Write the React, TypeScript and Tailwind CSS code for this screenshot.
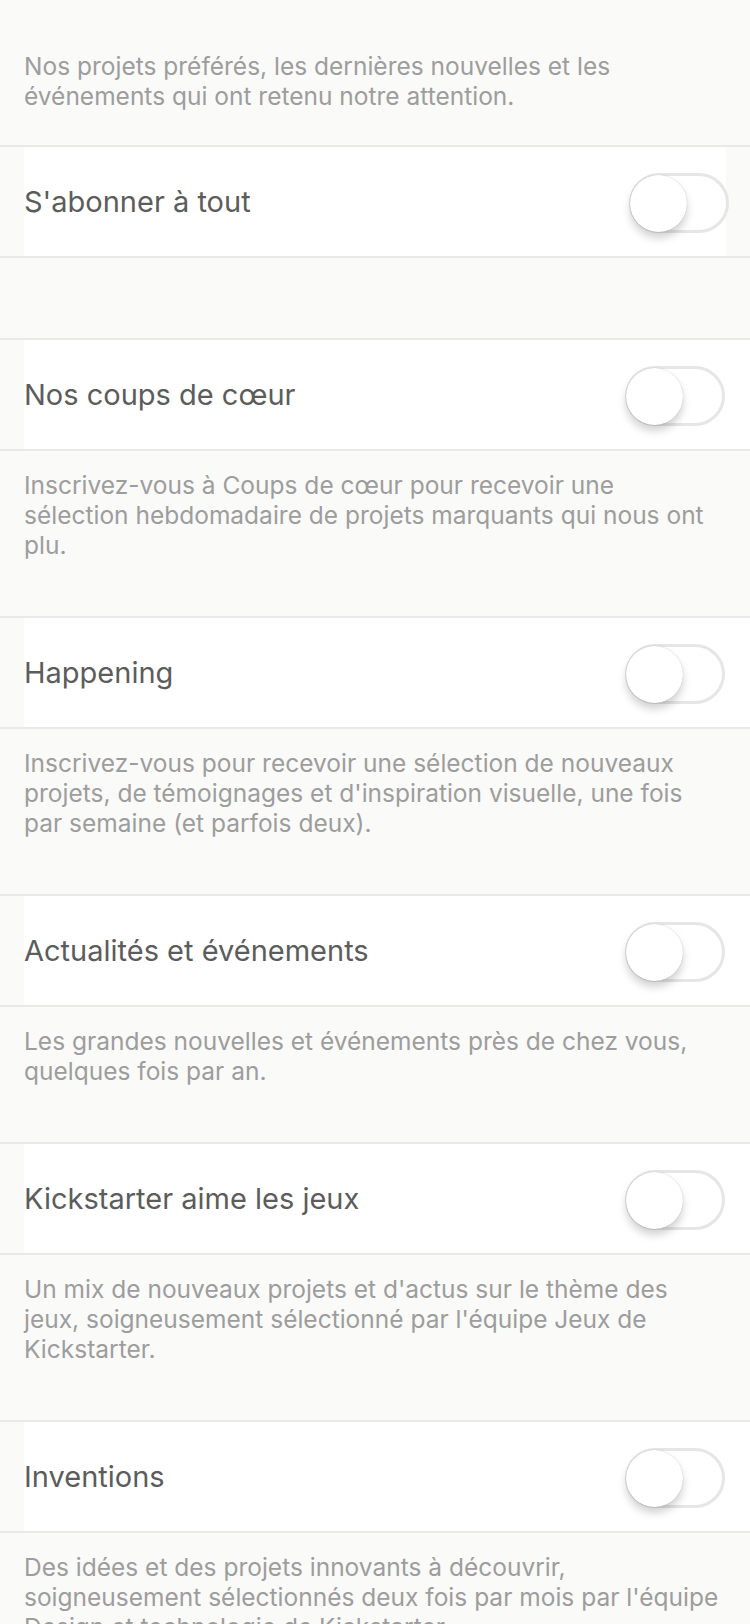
const sections = [
  {
    title: "Nos coups de cœur",
    desc: "Inscrivez-vous à Coups de cœur pour recevoir une sélection hebdomadaire de projets marquants qui nous ont plu.",
  },
  {
    title: "Happening",
    desc: "Inscrivez-vous pour recevoir une sélection de nouveaux projets, de témoignages et d'inspiration visuelle, une fois par semaine (et parfois deux).",
  },
  {
    title: "Actualités et événements",
    desc: "Les grandes nouvelles et événements près de chez vous, quelques fois par an.",
  },
  {
    title: "Kickstarter aime les jeux",
    desc: "Un mix de nouveaux projets et d'actus sur le thème des jeux, soigneusement sélectionné par l'équipe Jeux de Kickstarter.",
  },
  {
    title: "Inventions",
    desc: "Des idées et des projets innovants à découvrir, soigneusement sélectionnés deux fois par mois par l'équipe Design et technologie de Kickstarter.",
  },
];

const Toggle = ({ shift }: { shift?: boolean }) => (
  <div
    className={
      shift
        ? "relative -mr-[3px] mt-[2px] h-[60px] w-[100px] shrink-0 rounded-full border-[3px] border-[#e6e6e6] bg-white"
        : "relative mt-[2px] h-[60px] w-[100px] shrink-0 rounded-full border-[3px] border-[#e6e6e6] bg-white"
    }
  >
    <div className="absolute left-[-2px] top-[-1px] h-[57px] w-[57px] rounded-full bg-white shadow-[0_6px_8px_rgba(0,0,0,0.18),0_0_1px_rgba(0,0,0,0.25)]" />
  </div>
);

const Row = ({ title, full }: { title: string; full?: boolean }) => (
  <div className="box-border h-[113px] border-y-2 border-[#e9e9e8]">
    <div
      className={
        full
          ? "ml-[24px] mr-[24px] flex h-full items-center justify-between bg-white"
          : "ml-[24px] flex h-full items-center justify-between bg-white pr-[25px]"
      }
    >
      <span className="text-[29px] text-[#5c5c5c]">{title}</span>
      <Toggle shift={full} />
    </div>
  </div>
);

const Desc = ({ text }: { text: string }) => (
  <p className="pl-[24px] pr-[26px] pt-[19px] pb-[56px] text-[24.5px] leading-[30px] text-[#9d9d9d]">
    {text}
  </p>
);

const App = () => {
  return (
    <div
      className="min-h-screen bg-[#fafaf9]"
      style={{ fontFamily: "Inter, 'Noto Sans', sans-serif" }}
    >
      <p className="pl-[24px] pr-[26px] pt-[51px] pb-[34px] text-[24.5px] leading-[30px] text-[#9d9d9d]">
        Nos projets préférés, les dernières nouvelles et les événements qui ont retenu notre attention.
      </p>
      <Row title="S'abonner à tout" full />
      <div className="h-[80px]" />
      {sections.map((s) => (
        <div key={s.title}>
          <Row title={s.title} />
          <Desc text={s.desc} />
        </div>
      ))}
    </div>
  );
};

export default App;
